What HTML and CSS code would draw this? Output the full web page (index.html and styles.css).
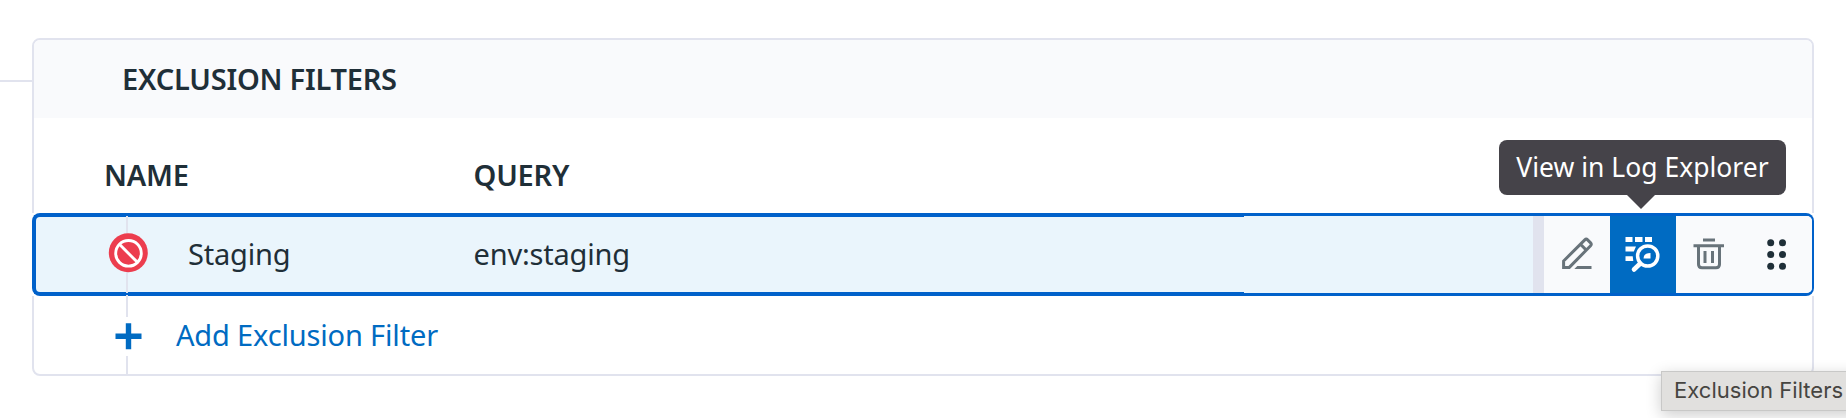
FILE: index.html
```html
<!DOCTYPE html>
<html lang="en">
<head>
<meta charset="utf-8">
<title>Exclusion Filters</title>
<link rel="stylesheet" href="styles.css">
</head>
<body>
<main class="page">
  <div class="connector"></div>
  <section class="card">
    <header class="card-header"><h2 class="title">EXCLUSION FILTERS</h2></header>
    <div class="columns">
      <span class="col-name">NAME</span>
      <span class="col-query">QUERY</span>
    </div>
    <div class="row">
      <div class="row-main">
        <div class="rail rail-row">
          <svg class="ban" viewBox="0 0 40 40" width="40" height="40">
            <circle cx="20.3" cy="19.8" r="19.500" fill="#ec3d4e"/>
            <g fill="none" stroke="#fff" stroke-width="2.900"><circle cx="20.500" cy="20.300" r="12.800"/><path d="M11.400 11.300l18 18"/></g>
          </svg>
        </div>
        <span class="name">Staging</span>
        <span class="query">env:staging</span>
      </div>
      <div class="row-side">
        <div class="actions">
          <button class="action" aria-label="Edit">
            <svg viewBox="0 0 66 77" width="66" height="77" fill="none" stroke="#68737a" stroke-width="3">
              <path d="M19.600 51.400v-6.400L40.800 23.900q1.400-1.400 2.800 0l3 3q1.400 1.400 0 2.800L25.300 51.400zM36.500 28.300l5.800 5.800"/>
              <path d="M33.300 50h14.200v3H30.300z" fill="#68737a" stroke="none"/>
            </svg>
          </button>
          <button class="action action-active" aria-label="View in Log Explorer">
            <svg viewBox="0 0 66 77" width="66" height="77">
              <g fill="#fff"><path d="M15.500 21h7v5h-7zM25 21h7.500v5H25zM35 21h7v5h-7zM15.500 30.500h10.500l-2.200 5h-8.300zM15.500 40.200h7.200l.6 4.800h-7.800zM33.500 42.500q0-5.500 7-5.500v5.500z"/></g>
              <circle cx="37.700" cy="40" r="10.100" fill="none" stroke="#fff" stroke-width="3.500"/>
              <path d="M30.300 47.500l-6.300 6" fill="none" stroke="#fff" stroke-width="4.600" stroke-linecap="round"/>
            </svg>
          </button>
          <button class="action" aria-label="Delete">
            <svg viewBox="0 0 66 77" width="66" height="77" fill="none" stroke="#68737a" stroke-width="3">
              <path d="M27 24h12M17.500 29.800h30.500M22.500 30v18.300q0 3.500 3.500 3.500h14q3.500 0 3.500-3.500V30M29 35v12M36.500 35v12"/>
            </svg>
          </button>
          <button class="action action-drag" aria-label="Reorder">
            <svg viewBox="0 0 70 77" width="70" height="77" fill="#1f2f38">
              <circle cx="28.700" cy="26.800" r="3.500"/><circle cx="40.500" cy="26.800" r="3.500"/>
              <circle cx="28.700" cy="38.500" r="3.500"/><circle cx="40.500" cy="38.500" r="3.500"/>
              <circle cx="28.700" cy="50.200" r="3.500"/><circle cx="40.500" cy="50.200" r="3.500"/>
            </svg>
          </button>
        </div>
      </div>
      <div class="tooltip" role="tooltip"><span class="tooltip-text">View in Log Explorer</span></div>
    </div>
    <div class="add-row">
      <div class="rail rail-add">
        <svg class="plus" viewBox="0 0 39 39" width="39" height="39"><path d="M19.500 6.300v26M6.500 19.300h26" stroke="#006bc2" stroke-width="5.400"/></svg>
      </div>
      <a class="add">Add Exclusion Filter</a>
    </div>
  </section>
  <div class="native-tip"><span class="native-text">Exclusion Filters</span></div>
</main>
</body>
</html>
```
FILE: styles.css
```css
* { box-sizing: border-box; }
body { margin: 0; background: #fff; color: #1f2f38; font-family: "Noto Sans", sans-serif; font-size: 29px; line-height: 40px; letter-spacing: -0.19px; }
.page { position: relative; display: flex; align-items: flex-start; width: 1846px; height: 418px; padding-top: 38px; overflow: hidden; }
.connector { flex: none; width: 32px; height: 2px; margin-top: 42px; background: #e1e3ee; }
.card { flex: none; width: 1782px; height: 338px; border: 2px solid #e1e3ee; border-radius: 8px; background: #fff; }
.card-header { display: flex; align-items: center; height: 78px; padding-left: 88px; background: #f9fafc; border-radius: 6px 6px 0 0; }
.title { margin: 0; font-size: 29px; font-weight: 600; letter-spacing: -0.23px; white-space: nowrap; }
.columns { display: flex; height: 95px; padding: 37px 0 0 70px; font-weight: 600; }
.col-name { width: 369.5px; }
.row { position: relative; display: flex; height: 83px; margin: 0 -2px; background: #fff; }
.row-main { display: flex; align-items: center; width: 1212px; border: 4px solid #0061ca; border-right: 0; border-radius: 8px 0 0 8px; background: #eaf5fc; padding-left: 72px; }
.rail { flex: none; display: flex; align-items: center; justify-content: center; width: 40px; }
.rail-row { height: 77px; margin: -1px 0; background: linear-gradient(#e1e3ee, #e1e3ee) 18px 0 / 2px 100% no-repeat; }
.ban { flex: none; margin-top: -4px; }
.name, .query { padding-bottom: 2px; }
.name { width: 325.5px; padding-left: 40px; }
.query { letter-spacing: -0.2px; }
.row-side { display: flex; flex: 1; justify-content: flex-end; border: 3px solid #0061ca; border-width: 3px 2px 3px 0; border-radius: 0 8px 8px 0; background: #eaf5fc; }
.actions { display: flex; border-left: 11px solid #e1e3ee; background: #f9fafc; border-radius: 0 5px 5px 0; }
.action { width: 66px; height: 77px; padding: 0; border: 0; background: none; }
.action svg { display: block; }
.action-active { background: #006bc2; }
.action-drag { width: 70px; }
.tooltip { position: absolute; right: 28px; top: -73px; width: 287px; height: 55px; border-radius: 8px; background: #454349; color: #fff; font-size: 26.5px; line-height: 54px; letter-spacing: 0; text-align: center; white-space: nowrap; }
.tooltip::after { content: ""; position: absolute; left: 127px; top: 54px; border: 15px solid transparent; border-top-color: #454349; border-bottom: 0; }
.add-row { position: relative; display: flex; align-items: center; height: 79px; margin-top: -1px; padding-left: 74px; }
.rail-add { align-self: stretch; padding-top: 3px; width: 40px; background: linear-gradient(#e1e3ee, #e1e3ee) 18px 0 / 2px 22px no-repeat, linear-gradient(#e1e3ee, #e1e3ee) 18px 61px / 2px 18px no-repeat; }
.add { padding-left: 28px; color: #006bc2; letter-spacing: -0.16px; }
.native-tip { position: absolute; left: 1661px; top: 371px; width: 200px; height: 40px; padding-left: 12px; border: 1px solid #c8c8c7; background: #e1e0de; color: #464541; box-shadow: 0 4px 16px rgba(0, 0, 0, .2); font-family: Inter, sans-serif; font-size: 22px; line-height: 37px; letter-spacing: 0.03px; white-space: nowrap; }
```
